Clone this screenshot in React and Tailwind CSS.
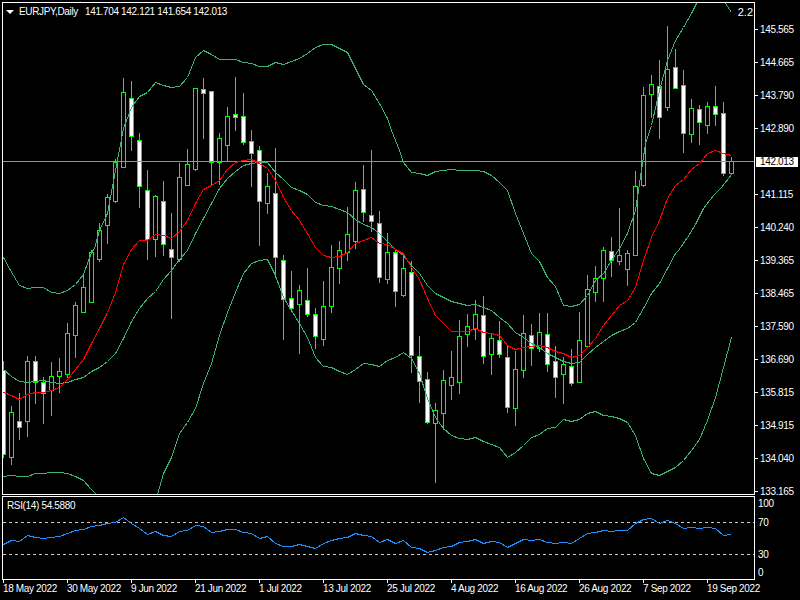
const candles = [
[361,457,370,454,1],[406,464,412,457,0],[393,439,421,427,1],[356,436,361,421,0],[356,403,361,382,1],[377,423,382,393,1],
[362,415,376,390,0],[358,392,371,376,0],[323,377,333,374,0],[302,357,305,335,0],[275,312,287,312,0],[250,302,252,302,0],
[223,261,230,259,0],[194,243,197,225,0],[159,202,162,201,0],[78,167,92,167,0],[81,150,98,136,1],[133,207,140,186,1],
[170,259,190,239,1],[195,256,196,239,0],[181,255,201,244,1],[213,318,249,257,1],[163,261,177,259,0],[149,185,164,185,0],
[88,170,88,169,0],[78,138,89,93,1],[91,184,91,162,1],[133,184,138,162,0],[107,161,116,145,0],[77,130,114,117,1],
[93,144,116,142,1],[130,186,141,153,1],[146,245,150,201,1],[173,213,186,203,0],[148,277,193,257,1],[255,339,260,299,1],
[271,311,298,308,1],[285,353,290,304,0],[268,316,300,314,1],[308,348,314,336,1],[281,345,306,339,0],[245,312,267,306,0],
[241,283,250,268,0],[207,260,234,252,0],[182,248,190,241,0],[165,221,189,212,1],[150,231,215,221,1],[211,282,223,277,1],
[233,283,252,279,0],[250,306,252,291,1],[255,296,268,295,0],[261,372,272,355,1],[336,402,356,381,1],[372,423,379,422,1],
[403,482,410,423,0],[370,429,380,413,0],[351,399,377,385,0],[320,393,336,382,0],[314,346,326,334,0],[300,339,314,329,0],
[296,363,315,356,1],[333,374,338,354,0],[321,357,340,354,1],[345,412,357,407,1],[351,425,369,408,0],[315,377,333,370,0],
[324,365,335,348,1],[313,351,332,348,0],[313,371,334,364,1],[346,397,361,377,1],[357,403,364,374,0],[349,385,366,383,1],
[312,382,340,382,0],[275,346,289,346,0],[266,301,278,292,0],[247,301,250,278,0],[237,276,251,260,1],[208,264,255,261,0],
[250,285,253,269,0],[171,255,186,255,0],[87,186,95,185,0],[75,117,84,94,0],[60,138,86,117,1],[26,110,69,107,0],
[49,88,67,88,1],[70,152,85,133,1],[99,142,108,134,0],[105,144,109,122,1],[102,133,106,125,0],[86,125,106,114,1],
[102,175,113,173,1],[157,173,161,173,0],
];

const upper = "3,257 10,270 19,285 27,288 35,287 43,287 51,292 59,293 67,290 75,284 83,274 91,252 94,248 99,230 107,213 115,170 123,128 131,107 139,96 147,92 155,82 163,85 171,87 179,86 187,77 195,57 203,50 211,54 219,59 227,59 235,59 243,62 251,63 259,66 267,66 275,62 283,64 291,61 299,58 307,53 315,47 323,44 331,44 339,48 347,52 355,68 363,84 371,90 379,103 387,118 391,130 395,140 399,150 403,162 411,172 419,173 427,175 435,171 443,170 451,169 459,170 467,170 475,170 483,171 491,175 499,182 507,190 515,213 523,233 531,253 539,261 547,277 555,286 563,305 571,306 579,304 587,295 595,280 603,273 611,260 619,248 627,233 635,210 645,143 651,125 659,90 667,60 675,40 683,27 691,13 699,-3 723,-3 725,3 731,12";
const inner = "3,369 11,376 19,381 27,382 35,381 43,380 51,382 59,383 67,382 75,379 83,377 91,371 99,367 107,361 115,353 123,338 131,321 139,308 147,298 155,291 163,279 171,270 179,259 187,250 195,233 203,218 211,203 219,188 227,178 235,171 243,165 251,163 259,162 267,162 275,172 283,179 291,187 299,190 307,194 315,202 323,205 331,206 339,209 347,212 355,219 363,224 371,227 379,233 387,241 395,249 403,255 411,265 419,273 427,285 435,293 443,297 451,301 459,303 467,305 475,304 483,307 491,310 499,317 507,323 515,332 523,337 531,343 539,347 547,353 555,357 563,361 571,363 579,362 587,354 595,347 603,341 611,335 619,331 627,328 635,322 643,308 651,293 659,283 667,268 675,253 678,250 687,237 695,224 703,208 713,195 721,187 731,174";
const lower = "3,476 11,475 19,476 27,476 35,473 43,473 51,472 59,472 67,473 75,476 83,480 91,489 96,494 99,497 152,497 157,494 163,473 171,457 179,433 187,422 195,408 203,383 211,363 219,335 227,312 235,292 243,273 251,263 259,260 267,259 275,275 283,297 291,310 299,323 307,337 315,357 323,366 331,367 339,371 347,374 355,369 363,363 371,364 379,366 387,360 395,357 403,352 411,358 419,373 427,398 435,417 443,428 451,435 459,438 467,439 475,437 483,441 491,444 499,447 507,457 515,452 523,445 531,437 539,434 547,428 555,427 563,419 571,421 579,419 587,413 595,411 603,415 611,416 619,418 627,422 635,435 643,458 651,473 659,475 667,471 675,467 683,460 691,450 699,439 707,420 715,397 723,367 731,337";
const red = "3,392 11,395 19,399 27,394 35,392 43,392 51,390 59,387 67,379 75,369 83,359 91,343 99,328 107,312 115,292 123,264 131,249 139,240 147,240 155,234 163,235 171,238 179,231 187,220 195,203 203,189 211,185 219,180 227,169 235,162 243,160 251,159 259,163 267,168 275,180 283,197 291,210 299,220 307,233 315,247 323,255 331,257 339,256 347,252 355,243 363,240 371,237 379,243 387,244 395,249 403,253 411,267 419,279 427,298 435,315 443,323 451,331 459,331 467,331 475,328 483,332 491,333 499,335 507,345 515,349 523,347 531,346 539,345 547,347 555,351 563,353 571,357 579,355 587,347 595,338 603,325 611,315 619,305 627,300 635,287 643,260 651,237 659,220 667,198 675,185 683,179 691,169 699,163 707,153 715,150 723,153 731,155";
const rsi = [544,540,541,535,537,538,537,536,533,530,529,526,525,523,522,517,523,528,534,531,535,536,531,530,525,526,532,531,529,529,532,533,538,536,543,546,546,544,546,548,543,540,538,537,533,535,536,542,539,543,540,547,548,552,550,547,546,542,541,539,543,541,542,547,543,539,540,539,542,543,542,543,538,533,532,530,531,530,530,523,519,518,523,520,523,528,527,528,527,528,535,534];
const rsiPoints = rsi.map((y, i) => `${3 + 8 * i},${y}`).join(" ");

const prices = ["145.565","144.665","143.790","142.890","142.013","141.115","140.240","139.365","138.465","137.590","136.690","135.815","134.915","134.040","133.165"];
const dates = ["18 May 2022","30 May 2022","9 Jun 2022","21 Jun 2022","1 Jul 2022","13 Jul 2022","25 Jul 2022","4 Aug 2022","16 Aug 2022","26 Aug 2022","7 Sep 2022","19 Sep 2022"];

const shift = (pts) => pts.split(" ").map((p) => { const [x, y] = p.split(","); return `${+x + 0.5},${+y + 0.5}`; }).join(" ");

function Line({ points, color }) {
  return <polyline points={shift(points)} fill="none" stroke={color} strokeWidth="1" shapeRendering="crispEdges" />;
}

function Candle({ c, i }) {
  const [high, low, top, bottom, white] = c;
  const x = 3 + 8 * i;
  return (
    <g shapeRendering="crispEdges">
      <rect x={x} y={high} width="1" height={low - high + 1} fill="#00ff00" />
      <rect x={x - 2} y={top} width="5" height={bottom - top + 1} fill="#00ff00" />
      <rect x={x - 1} y={top + 1} width="3" height={Math.max(bottom - top - 1, 1)} fill={white ? "#ffffff" : "#000000"} />
    </g>
  );
}

export default function App() {
  return (
    <div className="w-[800px] h-[600px] bg-black overflow-hidden pt-[2px] pl-[2px] text-white text-[10px] tracking-[-0.35px] leading-[11px] font-['Liberation_Sans',sans-serif]">
      <div className="flex h-[493px]">
        <div className="relative w-[753px] h-[493px] border border-white shrink-0">
          <svg width="751" height="491" viewBox="3 3 751 491" className="block">
            {candles.map((c, i) => <Candle key={i} c={c} i={i} />)}
            <rect x="3" y="161" width="751" height="1" fill="#8a949e" shapeRendering="crispEdges" />
            <Line points={upper} color="#3cb371" />
            <Line points={inner} color="#3cb371" />
            <Line points={lower} color="#3cb371" />
            <Line points={red} color="#ff0000" />
          </svg>
          <div className="absolute left-[3px] top-[3px] flex items-center h-[11px]">
            <svg width="8" height="4" viewBox="0 0 8 4" className="block mr-[5px]">
              <polygon points="0,0 8,0 4,4" fill="#ffffff" />
            </svg>
            <span className="whitespace-nowrap">EURJPY,Daily</span>
            <span className="whitespace-nowrap ml-[7px]">141.704 142.121 141.654 142.013</span>
          </div>
          <span className="absolute right-[1px] top-[3px] text-[11px] leading-[13px] tracking-normal">2.2</span>
        </div>
        <div className="flex flex-col pt-[11px]">
          {prices.map((p) =>
            p === "142.013" ? (
              <div key={p} className="flex items-center h-[33px] shrink-0">
                <div className="w-[42px] h-[10px] ml-[1px] pl-[4px] bg-white text-black leading-[10px]">{p}</div>
              </div>
            ) : (
              <div key={p} className="flex items-center h-[33px] shrink-0">
                <div className="w-[3px] h-px bg-white mr-[2px]" />
                <span>{p}</span>
              </div>
            )
          )}
        </div>
      </div>

      <div className="flex h-[84px] mt-px">
        <div className="relative w-[753px] h-[84px] border border-white shrink-0">
          <svg width="751" height="82" viewBox="3 497 751 82" className="block">
            <line x1="3" y1="522.5" x2="754" y2="522.5" stroke="#c8c8c8" strokeDasharray="3 3" shapeRendering="crispEdges" />
            <line x1="3" y1="554.5" x2="754" y2="554.5" stroke="#c8c8c8" strokeDasharray="3 3" shapeRendering="crispEdges" />
            <polyline points={shift(rsiPoints)} fill="none" stroke="#1e90ff" strokeWidth="1" shapeRendering="crispEdges" />
          </svg>
          <span className="absolute left-[4px] top-[3px] whitespace-nowrap">RSI(14) 54.5880</span>
        </div>
        <div className="flex flex-col pl-[3px] pt-[2px]">
          <span>100</span>
          <span className="mt-[8px]">70</span>
          <span className="mt-[21px]">30</span>
          <span className="mt-[7px]">0</span>
        </div>
      </div>

      <div className="flex pl-px">
        {dates.map((d) => (
          <div key={d} className="w-[64px] shrink-0">
            <div className="w-px h-[3px] bg-white" />
            <div className="whitespace-nowrap">{d}</div>
          </div>
        ))}
      </div>
    </div>
  );
}
